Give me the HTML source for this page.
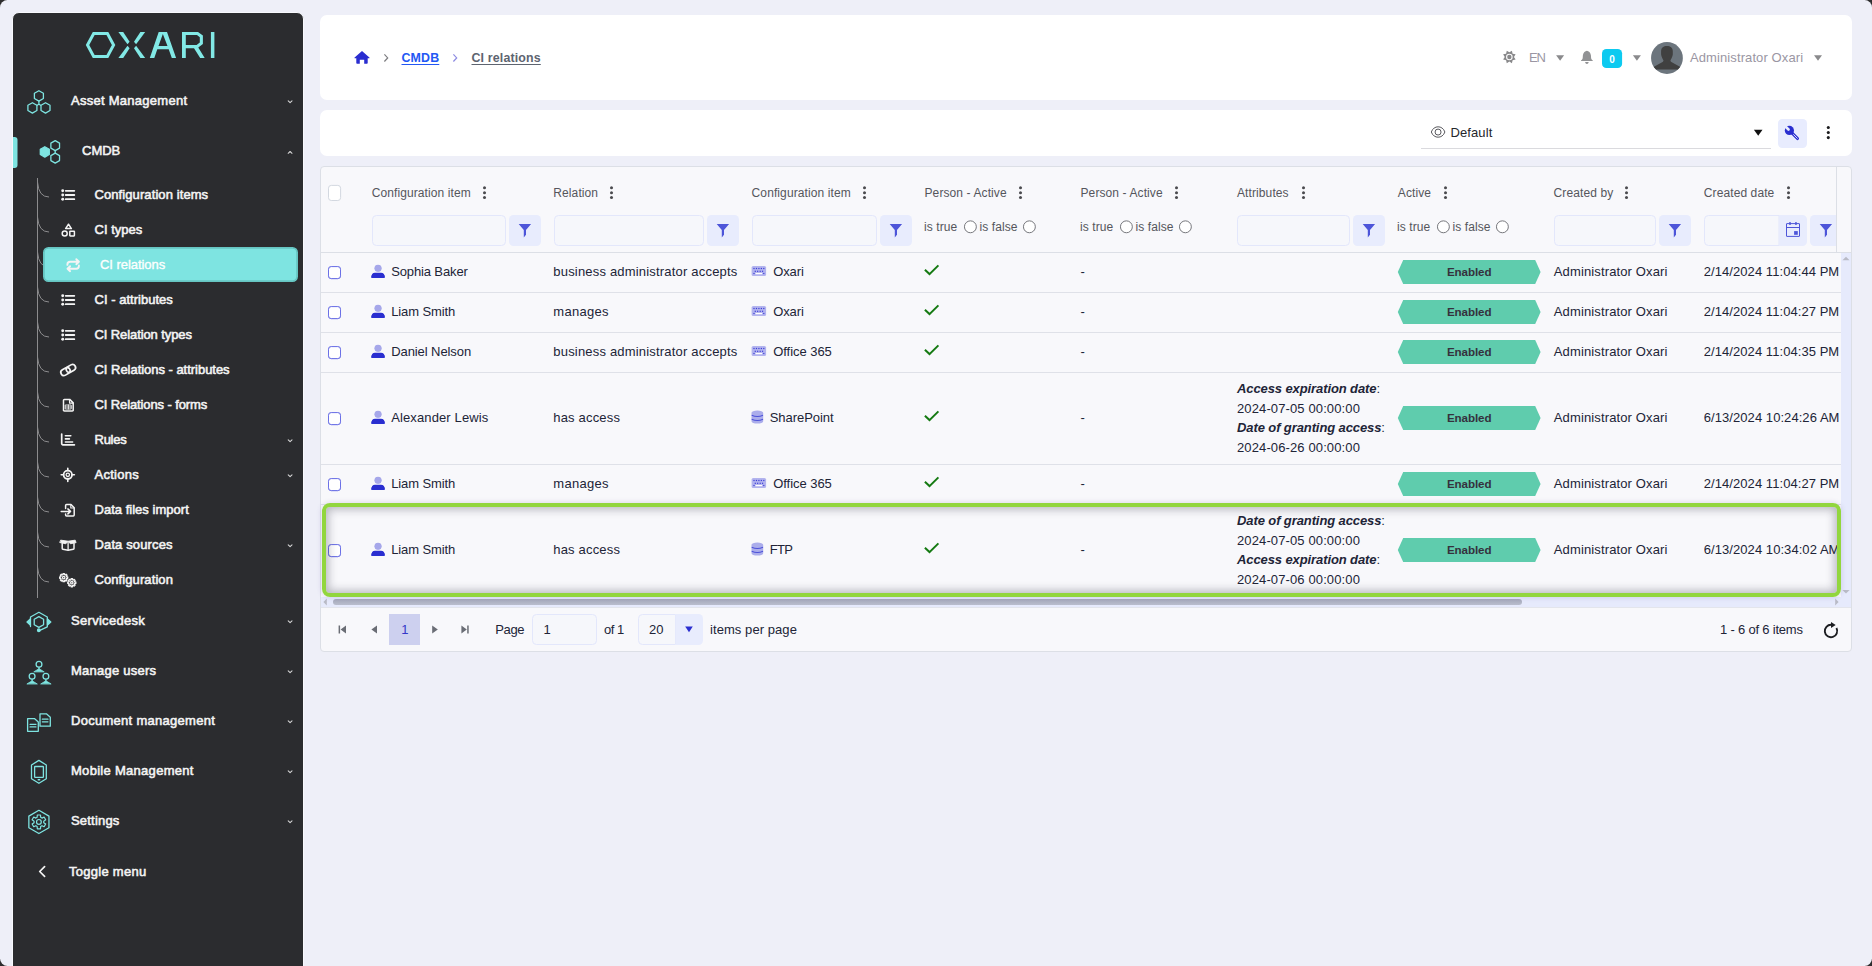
<!DOCTYPE html>
<html lang="en">
<head>
<meta charset="utf-8">
<title>CI relations</title>
<style>
*{box-sizing:border-box;margin:0;padding:0}
html{background:#2d2d2e;width:1872px;height:966px;overflow:hidden}
body{position:relative;width:1872px;height:966px;overflow:hidden;background:#eeeff8;border-radius:7.5px;font-family:"Liberation Sans",sans-serif;font-size:13px;color:#2b2c30}
.abs{position:absolute}
svg{display:block;overflow:visible}
/* ---------- sidebar ---------- */
#side{position:absolute;left:12px;top:12px;width:292px;height:960px;background:#2b2c2f;border:1px solid #f8f9fd;border-radius:7px 7px 0 0}
.mi{position:absolute;left:0;width:290px;height:24px;color:#f4f4f4;font-weight:400;-webkit-text-stroke:0.55px #f4f4f4;font-size:13px;letter-spacing:0.27px;line-height:24px;white-space:nowrap}
.mi .t{position:absolute;left:58px;top:0}
.si{position:absolute;left:0;width:290px;height:24px;color:#f4f4f4;font-weight:400;-webkit-text-stroke:0.55px #f4f4f4;font-size:13px;letter-spacing:0.02px;line-height:24px;white-space:nowrap}
.si .t{position:absolute;left:81px;top:0}
/* ---------- cards ---------- */
.card{position:absolute;background:#fff;border-radius:7px}
#hdr{left:320px;top:15px;width:1532px;height:85px}
#tool{left:320px;top:110px;width:1532px;height:46px}
#grid{position:absolute;left:320px;top:166px;width:1532px;height:486px;background:#f8f8fb;border:1px solid #dcdfe6;border-radius:4px;overflow:hidden}
.bc{font-weight:700;font-size:12.4px;line-height:16px;text-decoration:underline;text-underline-offset:2px;text-decoration-thickness:1px;letter-spacing:0.15px;white-space:nowrap}
.ht{font-size:13px;line-height:16px;color:#9a96a3;white-space:nowrap}
.c{font-size:13px;line-height:16px;color:#212437;white-space:nowrap}
.h{font-size:12px;line-height:16px;color:#55565c;white-space:nowrap;letter-spacing:0.1px}
.en{width:142.8px;text-align:center;font-weight:700;font-size:11.6px;line-height:16px;color:#35313d;letter-spacing:-0.1px}

</style>
</head>
<body>
<!-- SIDEBAR -->
<div id="side">
<svg class="abs" style="left:0;top:0" width="290" height="70" viewBox="13 13 290 70">
<g fill="#82e9e6">
<polygon points="87.5,45 93.7,33.5 107.4,33.5 113.6,45 107.4,56.5 93.7,56.5" fill="none" stroke="#82e9e6" stroke-width="3" stroke-linejoin="miter"/>
<polygon points="118.4,32 123.2,32 129.6,41.7 127.5,44.3"/>
<polygon points="127.5,45.7 129.6,48.3 123.2,58 118.4,58"/>
<polygon points="145.2,32 140.4,32 134,41.7 136.1,44.3"/>
<polygon points="136.1,45.7 134,48.3 140.4,58 145.2,58"/>
<path fill-rule="evenodd" d="M149.8,58 L158.7,32 L167,32 L176.1,58 L171.8,58 L168.7,49.3 L157.3,49.3 L154.3,58 Z M162.85,34 L158.5,46 L167.5,46 Z"/>
<path fill-rule="evenodd" d="M182,32 L198,32 L202.9,35.6 L202.9,43.9 L198.3,47.4 L204.7,58 L200.2,58 L194,48.2 L185.8,48.2 L185.8,58 L182,58 Z M185.8,35.1 L197,35.1 L199.8,37.2 L199.8,42.6 L196.6,44.9 L185.8,44.9 Z"/>
<rect x="210.9" y="32" width="3.5" height="26"/>
</g>
</svg>

<svg class="abs" style="left:-13px;top:-13px" width="320" height="979" viewBox="0 0 320 979">
<g fill="none" stroke="#8c8c8e" stroke-width="1">
<path d="M37.5,178 V598"/>
<path d="M37.5,182 Q38.5,197 49,197"/>
<path d="M37.5,217 Q38.5,232 49,232"/>
<path d="M37.5,252 Q38.5,267 49,267"/>
<path d="M37.5,287 Q38.5,302 49,302"/>
<path d="M37.5,322 Q38.5,337 49,337"/>
<path d="M37.5,357 Q38.5,372 49,372"/>
<path d="M37.5,392 Q38.5,407 49,407"/>
<path d="M37.5,427 Q38.5,442 49,442"/>
<path d="M37.5,462 Q38.5,477 49,477"/>
<path d="M37.5,497 Q38.5,512 49,512"/>
<path d="M37.5,532 Q38.5,547 49,547"/>
<path d="M37.5,567 Q38.5,582 49,582"/>
</g>
<rect x="43.9" y="247.9" width="253.2" height="33.2" rx="4.6" fill="#7ee4e1" stroke="#66c5c2" stroke-width="1.8"/>
<path d="M13,137 h1.5 a3,3 0 0 1 3,3 v25 a3,3 0 0 1 -3,3 h-1.5 z" fill="#7ee4e1"/>
<g fill="none" stroke="#7ee4e1" stroke-width="1.3" stroke-linejoin="round" stroke-linecap="round">
<polygon points="38.90,90.70 34.40,93.30 34.40,98.50 38.90,101.10 43.40,98.50 43.40,93.30"/>
<polygon points="32.40,102.70 27.90,105.30 27.90,110.50 32.40,113.10 36.90,110.50 36.90,105.30"/>
<polygon points="45.50,102.70 41.00,105.30 41.00,110.50 45.50,113.10 50.00,110.50 50.00,105.30"/>
<path d="M38.9,101.2 V104.2 L37.1,105.2 M38.9,104.2 L40.7,105.2"/>
<polygon points="44.80,146.70 40.30,149.30 40.30,154.50 44.80,157.10 49.30,154.50 49.30,149.30" fill="#7ee4e1"/>
<polygon points="55.20,140.60 50.87,143.10 50.87,148.10 55.20,150.60 59.53,148.10 59.53,143.10"/>
<polygon points="55.20,153.10 50.87,155.60 50.87,160.60 55.20,163.10 59.53,160.60 59.53,155.60"/>
<path d="M55.2,150.7 V153"/>
<polygon points="38.90,616.60 34.22,619.30 34.22,624.70 38.90,627.40 43.58,624.70 43.58,619.30"/>
<path d="M30.5,626.6 V617 L38.9,612.3 L47.3,617 V626.8 L39.8,630.4"/>
<path d="M30.3,619 L27,622 L30.3,625 Z" fill="#7ee4e1"/>
<path d="M47.5,619 L50.8,622 L47.5,625 Z" fill="#7ee4e1"/>
<circle cx="38.8" cy="630.3" r="1.3" fill="#7ee4e1"/>
<circle cx="39" cy="664.2" r="2.9"/>
<path d="M39,667.4000000000001 V668.8000000000001"/>
<path d="M34.1,671.7 L39,668.7 L43.9,671.7 Z" fill="#7ee4e1" stroke-width="0.8"/>
<circle cx="32.1" cy="676.3" r="2.9"/>
<path d="M32.1,679.5 V680.9"/>
<path d="M27.200000000000003,683.8 L32.1,680.8 L37.0,683.8 Z" fill="#7ee4e1" stroke-width="0.8"/>
<circle cx="45.9" cy="676.3" r="2.9"/>
<path d="M45.9,679.5 V680.9"/>
<path d="M41.0,683.8 L45.9,680.8 L50.8,683.8 Z" fill="#7ee4e1" stroke-width="0.8"/>
<path d="M27.6,718.6 H34.4 L38.3,722 V731.3 H27.6 Z"/>
<path d="M30,724.3 H36 M30,726.9 H36" stroke-width="1.2"/>
<path d="M40,713.8 H46.4 L50.3,717.2 V726.2 H40 Z"/>
<path d="M42.3,719.2 H48 M42.3,721.8 H48" stroke-width="1.2"/>
<path d="M38.9,760.4 L46.3,765 V778.8 L38.9,783.3 L31.5,778.8 V765 Z"/>
<rect x="34.6" y="766.5" width="8.8" height="10.8" rx="0.6"/>
<path d="M38.2,779.7 H39.7" stroke-width="1.4"/>
<polygon points="38.90,810.30 28.85,816.10 28.85,827.70 38.90,833.50 48.95,827.70 48.95,816.10"/>
<polygon points="37.30,814.98 40.50,814.98 40.66,817.33 41.98,818.09 44.09,817.06 45.69,819.82 43.74,821.13 43.74,822.67 45.69,823.98 44.09,826.74 41.98,825.71 40.66,826.47 40.50,828.82 37.30,828.82 37.14,826.47 35.82,825.71 33.71,826.74 32.11,823.98 34.06,822.67 34.06,821.13 32.11,819.82 33.71,817.06 35.82,818.09 37.14,817.33" stroke-width="1.2"/>
<circle cx="38.9" cy="821.9" r="2.4" stroke-width="1.2"/>
</g>
<g fill="none" stroke="#d9d9d9" stroke-width="1.05" stroke-linecap="round" stroke-linejoin="round">
<path d="M288.2,100.8 L290.1,102.6 L292,100.8"/>
<path d="M288.2,439.8 L290.1,441.6 L292,439.8"/>
<path d="M288.2,474.8 L290.1,476.6 L292,474.8"/>
<path d="M288.2,544.8 L290.1,546.6 L292,544.8"/>
<path d="M288.2,620.8 L290.1,622.6 L292,620.8"/>
<path d="M288.2,670.8 L290.1,672.6 L292,670.8"/>
<path d="M288.2,720.8 L290.1,722.6 L292,720.8"/>
<path d="M288.2,770.8 L290.1,772.6 L292,770.8"/>
<path d="M288.2,820.8 L290.1,822.6 L292,820.8"/>
<path d="M288.2,153.3 L290.1,151.5 L292,153.3"/>
<path d="M44.6,866.6 L39.7,871.5 L44.6,876.4" stroke-width="1.7" stroke="#f4f4f4"/>
</g>
<g fill="none" stroke="#f4f4f4" stroke-width="1.7" stroke-linecap="round" stroke-linejoin="round">
<circle cx="62.7" cy="190.8" r="1.45" fill="#f4f4f4" stroke="none"/><path d="M65.7,190.8 H74.3" stroke-width="1.8"/><circle cx="62.7" cy="195.0" r="1.45" fill="#f4f4f4" stroke="none"/><path d="M65.7,195.0 H74.3" stroke-width="1.8"/><circle cx="62.7" cy="199.2" r="1.45" fill="#f4f4f4" stroke="none"/><path d="M65.7,199.2 H74.3" stroke-width="1.8"/>
<circle cx="62.7" cy="295.8" r="1.45" fill="#f4f4f4" stroke="none"/><path d="M65.7,295.8 H74.3" stroke-width="1.8"/><circle cx="62.7" cy="300.0" r="1.45" fill="#f4f4f4" stroke="none"/><path d="M65.7,300.0 H74.3" stroke-width="1.8"/><circle cx="62.7" cy="304.2" r="1.45" fill="#f4f4f4" stroke="none"/><path d="M65.7,304.2 H74.3" stroke-width="1.8"/>
<circle cx="62.7" cy="330.8" r="1.45" fill="#f4f4f4" stroke="none"/><path d="M65.7,330.8 H74.3" stroke-width="1.8"/><circle cx="62.7" cy="335.0" r="1.45" fill="#f4f4f4" stroke="none"/><path d="M65.7,335.0 H74.3" stroke-width="1.8"/><circle cx="62.7" cy="339.2" r="1.45" fill="#f4f4f4" stroke="none"/><path d="M65.7,339.2 H74.3" stroke-width="1.8"/>
<path d="M68.5,224.2 L71.4,228.6 H65.6 Z" stroke-width="1.5"/>
<circle cx="64.7" cy="233.6" r="2.5" stroke-width="1.5"/>
<rect x="69.8" y="231.2" width="4.6" height="4.7" rx="0.4" stroke-width="1.5"/>
<path d="M67.4,264.9 V264.4 a2.7,2.7 0 0 1 2.7,-2.7 H78.6 M76.3,259.2 L78.9,261.7 L76.3,264.2" stroke-width="1.9"/>
<path d="M78.9,265.5 V266 a2.7,2.7 0 0 1 -2.7,2.7 H67.8 M70.1,266.2 L67.5,268.7 L70.1,271.2" stroke-width="1.9"/>
<g transform="translate(68.2,370) rotate(-30)" stroke-width="1.7"><rect x="-8" y="-3.1" width="9.8" height="6.2" rx="3.1"/><rect x="-1.8" y="-3.1" width="9.8" height="6.2" rx="3.1"/></g>
<path d="M64.4,399.4 H69.7 L73.2,402.9 V410.2 a0.9,0.9 0 0 1 -0.9,0.9 H64.4 a0.9,0.9 0 0 1 -0.9,-0.9 V400.3 a0.9,0.9 0 0 1 0.9,-0.9 Z" stroke-width="1.5"/>
<path d="M69.5,399.6 V403.1 H73" stroke-width="1.1"/>
<path d="M65.6,405 H71.2 V409 H65.6 Z M65.6,407 H71.2 M68.4,405 V409" stroke-width="0.9"/>
<path d="M61.7,434 V443.6 a1.2,1.2 0 0 0 1.2,1.2 H74.4" stroke-width="1.7"/>
<path d="M65.4,435.8 H70.8 M65.4,438.9 H69.4 M65.4,442 H72.6" stroke-width="1.6"/>
<circle cx="67.8" cy="474.8" r="4.2" stroke-width="1.8"/>
<circle cx="67.8" cy="474.8" r="1.7" stroke-width="1.3"/>
<path d="M67.8,468.2 V470.4 M67.8,479.2 V481.4 M61.2,474.8 H63.4 M72.2,474.8 H74.4" stroke-width="1.6"/>
<path d="M65.6,508.6 V505.4 a0.9,0.9 0 0 1 0.9,-0.9 H71 L74.2,507.7 V515 a0.9,0.9 0 0 1 -0.9,0.9 H66.5 a0.9,0.9 0 0 1 -0.9,-0.9 V514" stroke-width="1.5"/>
<path d="M70.8,504.7 V508 H74" stroke-width="1.1"/>
<path d="M61.2,511.4 H70.2 M67.9,508.9 L70.5,511.4 L67.9,513.9" stroke-width="1.5"/>
<path d="M62.2,543.6 V548.4 a1,1 0 0 0 0.7,0.95 L68.1,550.2 L73.3,549.35 a1,1 0 0 0 0.7,-0.95 V543.6" stroke-width="1.5"/>
<path d="M61,540.2 L68.1,541.2 L75.2,540.2 L76.1,542.6 L70.4,543.8 L68.1,541.4 L65.8,543.8 L60.1,542.6 Z" fill="#f4f4f4" stroke-width="0.9"/>
<path d="M68.1,542.4 V549.8" stroke-width="1.3"/>
<polygon points="67.74,576.90 67.74,578.30 66.61,578.35 66.28,579.13 67.05,579.96 66.06,580.95 65.23,580.18 64.45,580.51 64.40,581.64 63.00,581.64 62.95,580.51 62.17,580.18 61.34,580.95 60.35,579.96 61.12,579.13 60.79,578.35 59.66,578.30 59.66,576.90 60.79,576.85 61.12,576.07 60.35,575.24 61.34,574.25 62.17,575.02 62.95,574.69 63.00,573.56 64.40,573.56 64.45,574.69 65.23,575.02 66.06,574.25 67.05,575.24 66.28,576.07 66.61,576.85" stroke-width="1.3"/><circle cx="63.7" cy="577.6" r="1.2" stroke-width="1.3"/>
<polygon points="75.84,582.00 75.84,583.40 74.71,583.45 74.38,584.23 75.15,585.06 74.16,586.05 73.33,585.28 72.55,585.61 72.50,586.74 71.10,586.74 71.05,585.61 70.27,585.28 69.44,586.05 68.45,585.06 69.22,584.23 68.89,583.45 67.76,583.40 67.76,582.00 68.89,581.95 69.22,581.17 68.45,580.34 69.44,579.35 70.27,580.12 71.05,579.79 71.10,578.66 72.50,578.66 72.55,579.79 73.33,580.12 74.16,579.35 75.15,580.34 74.38,581.17 74.71,581.95" stroke-width="1.3"/><circle cx="71.8" cy="582.7" r="1.2" stroke-width="1.3"/>
</g>
</svg>
<div class="mi" style="top:76px;"><span class="t" style="left:58px">Asset Management</span></div>
<div class="mi" style="top:126px;letter-spacing:0px"><span class="t" style="left:69px">CMDB</span></div>
<div class="si" style="top:170px;letter-spacing:0.09px"><span class="t" style="left:81.5px">Configuration items</span></div>
<div class="si" style="top:205px;letter-spacing:0.02px"><span class="t" style="left:81.5px">CI types</span></div>
<div class="si" style="top:240px;color:#fdfffe;font-weight:400;letter-spacing:-0.05px;-webkit-text-stroke:0.35px #fdfffe"><span class="t" style="left:87px">CI relations</span></div>
<div class="si" style="top:275px;letter-spacing:0.02px"><span class="t" style="left:81.5px">CI - attributes</span></div>
<div class="si" style="top:310px;letter-spacing:-0.1px"><span class="t" style="left:81.5px">CI Relation types</span></div>
<div class="si" style="top:345px;letter-spacing:-0.03px"><span class="t" style="left:81.5px">CI Relations - attributes</span></div>
<div class="si" style="top:380px;letter-spacing:-0.11px"><span class="t" style="left:81.5px">CI Relations - forms</span></div>
<div class="si" style="top:415px;letter-spacing:-0.25px"><span class="t" style="left:81.5px">Rules</span></div>
<div class="si" style="top:450px;letter-spacing:0.25px"><span class="t" style="left:81.5px">Actions</span></div>
<div class="si" style="top:485px;letter-spacing:0.02px"><span class="t" style="left:81.5px">Data files import</span></div>
<div class="si" style="top:520px;letter-spacing:0.13px"><span class="t" style="left:81.5px">Data sources</span></div>
<div class="si" style="top:555px;letter-spacing:0.09px"><span class="t" style="left:81.5px">Configuration</span></div>
<div class="mi" style="top:596px;letter-spacing:0.3px"><span class="t" style="left:58px">Servicedesk</span></div>
<div class="mi" style="top:646px;letter-spacing:0.24px"><span class="t" style="left:58px">Manage users</span></div>
<div class="mi" style="top:696px;letter-spacing:0.28px"><span class="t" style="left:58px">Document management</span></div>
<div class="mi" style="top:746px;letter-spacing:0.29px"><span class="t" style="left:58px">Mobile Management</span></div>
<div class="mi" style="top:796px;letter-spacing:0.2px"><span class="t" style="left:58px">Settings</span></div>
<div class="mi" style="top:847px;"><span class="t" style="left:56px">Toggle menu</span></div>
</div>
<!-- HEADER -->
<div class="card" id="hdr">
<svg class="abs" style="left:0;top:0" width="1532" height="85" viewBox="320 15 1532 85">
<path fill="#2a2dd0" d="M362,50.9 L369.4,57.4 a0.55,0.55 0 0 1 -0.4,0.95 H367.7 V63 a0.8,0.8 0 0 1 -0.8,0.8 H364.2 V59.8 H359.8 V63.8 H357.1 a0.8,0.8 0 0 1 -0.8,-0.8 V58.35 H355 a0.55,0.55 0 0 1 -0.4,-0.95 Z"/>
<path d="M384.4,54.3 L387.7,57.9 L384.4,61.5" fill="none" stroke="#7d7d80" stroke-width="1.2"/>
<path d="M453.4,54.3 L456.7,57.9 L453.4,61.5" fill="none" stroke="#8d8be2" stroke-width="1.2"/>
<polygon points="1513.95,56.95 1515.59,59.53 1512.60,60.20 1511.93,63.19 1509.35,61.55 1506.77,63.19 1506.10,60.20 1503.11,59.53 1504.75,56.95 1503.11,54.37 1506.10,53.70 1506.77,50.71 1509.35,52.35 1511.93,50.71 1512.60,53.70 1515.59,54.37" fill="#88888a"/>
<circle cx="1509.35" cy="56.95" r="2.75" fill="none" stroke="#fbfbfb" stroke-width="1.15"/>
<path d="M1556.1,55.2 h8 l-4,5.6 z" fill="#8a8a8c"/>
<path d="M1632.9,55.2 h8 l-4,5.6 z" fill="#8a8a8c"/>
<path d="M1814,55.2 h8 l-4,5.6 z" fill="#8a8a8c"/>
<path fill="#919294" d="M1586.9,50.7 C1588.6,50.9 1590.6,52.4 1590.9,55.2 L1591.1,58 C1591.2,59.2 1592,60 1592.8,60.6 V61.1 H1581 V60.6 C1581.8,60 1582.6,59.2 1582.7,58 L1582.9,55.2 C1583.2,52.4 1585.2,50.9 1586.9,50.7 Z M1585.1,62.1 H1588.7 C1588.5,63.4 1587.8,64.05 1586.9,64.05 C1586,64.05 1585.3,63.4 1585.1,62.1 Z"/>
<rect x="1602" y="48.9" width="20.1" height="19.2" rx="4.4" fill="#0dcaf0"/>
<defs><clipPath id="av"><circle cx="1666.95" cy="58" r="15.9"/></clipPath></defs>
<circle cx="1666.95" cy="58" r="15.9" fill="#6c757d"/>
<g clip-path="url(#av)" fill="#404040"><path d="M1661.1,51 C1661.1,47.6 1663.6,45.9 1666.95,45.9 C1670.3,45.9 1672.8,47.6 1672.8,51 L1672.8,54.4 C1672.4,57 1671.3,58.8 1670.4,60.3 L1670.9,61.7 L1680.4,67 L1679,69.6 H1654.9 L1653.5,67 L1663,61.7 L1663.5,60.3 C1662.6,58.8 1661.5,57 1661.1,54.4 Z"/></g>
</svg>
<div class="abs bc" style="left:81.5px;top:35px;color:#2257f4">CMDB</div>
<div class="abs bc" style="left:151.5px;top:35px;color:#5d6470">CI relations</div>
<div class="abs ht" style="left:1209px;top:35px;letter-spacing:-1.2px">EN</div>
<div class="abs" style="left:1282px;top:35.4px;width:20.2px;height:19px;line-height:19px;text-align:center;color:#fff;font-weight:700;font-size:10px">0</div>
<div class="abs ht" style="left:1370px;top:35px;letter-spacing:0.1px">Administrator Oxari</div>
</div>
<div class="card" id="tool">
<svg class="abs" style="left:0;top:0" width="1532" height="46" viewBox="320 110 1532 46">
<rect x="1421" y="148" width="350" height="1" fill="#dadade"/>
<path d="M1431.3,132 C1432.6,128.4 1435.3,126.8 1438.1,126.8 C1440.9,126.8 1443.6,128.4 1444.9,132 C1443.6,135.6 1440.9,137.2 1438.1,137.2 C1435.3,137.2 1432.6,135.6 1431.3,132 Z" fill="none" stroke="#3a3a40" stroke-width="0.85"/>
<circle cx="1438.05" cy="132.05" r="3.0" fill="none" stroke="#3a3a40" stroke-width="0.85"/>
<path d="M1753.9,129.8 h8.6 l-4.3,6 z" fill="#111"/>
<rect x="1778" y="119" width="29" height="29" rx="4.2" fill="#e8ecfe"/>
<circle cx="1789.4" cy="130.4" r="4.6" fill="#2a2fd0"/>
<path d="M1784.6,125.6 L1788.5,129.5" stroke="#e8ecfe" stroke-width="2.7" stroke-linecap="round" fill="none"/>
<path d="M1792,133 L1797.5,138.5" stroke="#2a2fd0" stroke-width="3.1" stroke-linecap="round" fill="none"/>
<path d="M1793.6,134.6 L1797.3,138.3" stroke="#e8ecfe" stroke-width="0.9" stroke-linecap="round" fill="none"/>
<circle cx="1828.3" cy="127.5" r="1.55" fill="#1c1c1e"/>
<circle cx="1828.3" cy="132.55" r="1.55" fill="#1c1c1e"/>
<circle cx="1828.3" cy="137.6" r="1.55" fill="#1c1c1e"/>
</svg>
<div class="abs" style="left:1130.5px;top:15px;line-height:16px;font-size:13px;color:#25262b;letter-spacing:0.1px">Default</div>
</div>
<!-- GRID -->
<div id="grid">
<svg class="abs" style="left:0;top:0" width="1530" height="484" viewBox="321 167 1530 484">
<rect x="321" y="252" width="1530" height="1" fill="#dcdfe6"/>
<rect x="1836" y="167" width="1" height="85" fill="#dcdfe6"/>
<rect x="321" y="292" width="1520" height="1" fill="#dfe1e8"/>
<rect x="321" y="332" width="1520" height="1" fill="#dfe1e8"/>
<rect x="321" y="372" width="1520" height="1" fill="#dfe1e8"/>
<rect x="321" y="464" width="1520" height="1" fill="#dfe1e8"/>
<rect x="321" y="504" width="1520" height="1" fill="#dfe1e8"/>
<rect x="1841" y="253" width="10" height="354" fill="#e6eafc"/>
<rect x="321" y="597" width="1530" height="10.5" fill="#e6eafc"/>
<defs><linearGradient id="th" x1="0" y1="0" x2="0" y2="1"><stop offset="0" stop-color="#a6aabb"/><stop offset="1" stop-color="#b9bdcd"/></linearGradient></defs><rect x="333" y="599" width="1189" height="6" rx="3" fill="url(#th)"/>
<path d="M323.4,602 l3.4,-3.6 v7.2 z" fill="#b9bbc6"/>
<path d="M1838.6,602 l-3.4,-3.6 v7.2 z" fill="#b9bbc6"/>
<path d="M1846,256.8 l3.6,3.4 h-7.2 z" fill="#b9bbc6"/>
<path d="M1846,593.4 l3.6,-3.4 h-7.2 z" fill="#b9bbc6"/>
<rect x="321" y="607" width="1530" height="1" fill="#e3e5ec"/>
<circle cx="484.5" cy="187.8" r="1.5" fill="#4a4a4e"/>
<circle cx="484.5" cy="192.7" r="1.5" fill="#4a4a4e"/>
<circle cx="484.5" cy="197.6" r="1.5" fill="#4a4a4e"/>
<circle cx="611.5" cy="187.8" r="1.5" fill="#4a4a4e"/>
<circle cx="611.5" cy="192.7" r="1.5" fill="#4a4a4e"/>
<circle cx="611.5" cy="197.6" r="1.5" fill="#4a4a4e"/>
<circle cx="864.5" cy="187.8" r="1.5" fill="#4a4a4e"/>
<circle cx="864.5" cy="192.7" r="1.5" fill="#4a4a4e"/>
<circle cx="864.5" cy="197.6" r="1.5" fill="#4a4a4e"/>
<circle cx="1020.5" cy="187.8" r="1.5" fill="#4a4a4e"/>
<circle cx="1020.5" cy="192.7" r="1.5" fill="#4a4a4e"/>
<circle cx="1020.5" cy="197.6" r="1.5" fill="#4a4a4e"/>
<circle cx="1176.5" cy="187.8" r="1.5" fill="#4a4a4e"/>
<circle cx="1176.5" cy="192.7" r="1.5" fill="#4a4a4e"/>
<circle cx="1176.5" cy="197.6" r="1.5" fill="#4a4a4e"/>
<circle cx="1303.5" cy="187.8" r="1.5" fill="#4a4a4e"/>
<circle cx="1303.5" cy="192.7" r="1.5" fill="#4a4a4e"/>
<circle cx="1303.5" cy="197.6" r="1.5" fill="#4a4a4e"/>
<circle cx="1445.5" cy="187.8" r="1.5" fill="#4a4a4e"/>
<circle cx="1445.5" cy="192.7" r="1.5" fill="#4a4a4e"/>
<circle cx="1445.5" cy="197.6" r="1.5" fill="#4a4a4e"/>
<circle cx="1626.5" cy="187.8" r="1.5" fill="#4a4a4e"/>
<circle cx="1626.5" cy="192.7" r="1.5" fill="#4a4a4e"/>
<circle cx="1626.5" cy="197.6" r="1.5" fill="#4a4a4e"/>
<circle cx="1788.5" cy="187.8" r="1.5" fill="#4a4a4e"/>
<circle cx="1788.5" cy="192.7" r="1.5" fill="#4a4a4e"/>
<circle cx="1788.5" cy="197.6" r="1.5" fill="#4a4a4e"/>
<rect x="372.5" y="215.5" width="133" height="30" rx="4" fill="#f6f7fb" stroke="#e3e7fb"/>
<rect x="509" y="215" width="32" height="31" rx="4.5" fill="#e8ecfd"/><path d="M518.6999999999999,224 h12.4 l-5.1,5.9 v4.9 l-2.2,2.8 v-7.7 z" fill="#4d55d9"/>
<rect x="554.5" y="215.5" width="149" height="30" rx="4" fill="#f6f7fb" stroke="#e3e7fb"/>
<rect x="707" y="215" width="32" height="31" rx="4.5" fill="#e8ecfd"/><path d="M716.6999999999999,224 h12.4 l-5.1,5.9 v4.9 l-2.2,2.8 v-7.7 z" fill="#4d55d9"/>
<rect x="752.5" y="215.5" width="124" height="30" rx="4" fill="#f6f7fb" stroke="#e3e7fb"/>
<rect x="880" y="215" width="32" height="31" rx="4.5" fill="#e8ecfd"/><path d="M889.6999999999999,224 h12.4 l-5.1,5.9 v4.9 l-2.2,2.8 v-7.7 z" fill="#4d55d9"/>
<rect x="1237.5" y="215.5" width="112" height="30" rx="4" fill="#f6f7fb" stroke="#e3e7fb"/>
<rect x="1353" y="215" width="32" height="31" rx="4.5" fill="#e8ecfd"/><path d="M1362.7,224 h12.4 l-5.1,5.9 v4.9 l-2.2,2.8 v-7.7 z" fill="#4d55d9"/>
<rect x="1554.5" y="215.5" width="101" height="30" rx="4" fill="#f6f7fb" stroke="#e3e7fb"/>
<rect x="1659" y="215" width="32" height="31" rx="4.5" fill="#e8ecfd"/><path d="M1668.7,224 h12.4 l-5.1,5.9 v4.9 l-2.2,2.8 v-7.7 z" fill="#4d55d9"/>
<path d="M1708.5,215.5 H1779 V245.5 H1708.5 a4,4 0 0 1 -4,-4 V219.5 a4,4 0 0 1 4,-4 Z" fill="#f6f7fb" stroke="#e3e7fb"/>
<path d="M1779,215 H1802.5 a4.5,4.5 0 0 1 4.5,4.5 V241.5 a4.5,4.5 0 0 1 -4.5,4.5 H1779 Z" fill="#e8ecfd"/>
<g fill="none" stroke="#4d55d9" stroke-width="1"><rect x="1786.5" y="223.6" width="13" height="12.8" rx="0.3"/><path d="M1786.5,227.5 H1799.5"/></g><rect x="1789.25" y="222" width="1.5" height="3" rx="0.6" fill="#4d55d9"/><rect x="1795.2" y="222" width="1.5" height="3" rx="0.6" fill="#4d55d9"/><rect x="1794.1" y="231.1" width="3.7" height="3.7" fill="#4d55d9"/>
<path d="M1814.5,215 H1836 V246 H1814.5 a4.5,4.5 0 0 1 -4.5,-4.5 V219.5 a4.5,4.5 0 0 1 4.5,-4.5 Z" fill="#e8ecfd"/>
<path d="M1819.7,224 h12.4 l-5.1,5.9 v4.9 l-2.2,2.8 v-7.7 z" fill="#4d55d9"/>
<circle cx="970.4" cy="226.8" r="5.95" fill="#fff" stroke="#76777c" stroke-width="1"/>
<circle cx="1029.3999999999999" cy="226.8" r="5.95" fill="#fff" stroke="#76777c" stroke-width="1"/>
<circle cx="1126.3999999999999" cy="226.8" r="5.95" fill="#fff" stroke="#76777c" stroke-width="1"/>
<circle cx="1185.3999999999999" cy="226.8" r="5.95" fill="#fff" stroke="#76777c" stroke-width="1"/>
<circle cx="1443.3999999999999" cy="226.8" r="5.95" fill="#fff" stroke="#76777c" stroke-width="1"/>
<circle cx="1502.3999999999999" cy="226.8" r="5.95" fill="#fff" stroke="#76777c" stroke-width="1"/>
<rect x="328.5" y="185.4" width="12.1" height="15.1" rx="2.8" fill="#fff" stroke="#d3d8e0"/>
<rect x="328.5" y="266.6" width="12" height="12" rx="2.8" fill="#fff" stroke="#6b70e6"/>
<circle cx="378" cy="268.2" r="3.55" fill="#a7a9ea"/>
<path d="M371.4,277.9 v-1.3 c0.3,-2.2 1.6,-3.8 3.6,-3.8 h6 c2,0 3.3,1.6 3.6,3.8 v1.3 z" fill="#2a32d2"/>
<rect x="328.5" y="266.6" width="12" height="12" rx="2.8" fill="#fff" stroke="#6b70e6"/>
<circle cx="378.1" cy="268.3" r="3.25" fill="#a6a7ea"/>
<path d="M371.5,277.4 v-0.6 a3.9,3.9 0 0 1 3.9,-3.9 h5.4 a3.9,3.9 0 0 1 3.9,3.9 v0.6 z" fill="#2a2ed0"/>
<path d="M924.9,269.8 L929.5,274.1 L938.4,265.4" fill="none" stroke="#157a12" stroke-width="2" stroke-linejoin="miter"/>
<path d="M1397.8,272 l5.4,-12 h132 l5.4,12 l-5.4,12 h-132 z" fill="#5fccad"/>
<rect x="328.5" y="306.6" width="12" height="12" rx="2.8" fill="#fff" stroke="#6b70e6"/>
<circle cx="378" cy="308.2" r="3.55" fill="#a7a9ea"/>
<path d="M371.4,317.9 v-1.3 c0.3,-2.2 1.6,-3.8 3.6,-3.8 h6 c2,0 3.3,1.6 3.6,3.8 v1.3 z" fill="#2a32d2"/>
<rect x="328.5" y="306.6" width="12" height="12" rx="2.8" fill="#fff" stroke="#6b70e6"/>
<circle cx="378.1" cy="308.3" r="3.25" fill="#a6a7ea"/>
<path d="M371.5,317.4 v-0.6 a3.9,3.9 0 0 1 3.9,-3.9 h5.4 a3.9,3.9 0 0 1 3.9,3.9 v0.6 z" fill="#2a2ed0"/>
<path d="M924.9,309.8 L929.5,314.1 L938.4,305.4" fill="none" stroke="#157a12" stroke-width="2" stroke-linejoin="miter"/>
<path d="M1397.8,312 l5.4,-12 h132 l5.4,12 l-5.4,12 h-132 z" fill="#5fccad"/>
<rect x="328.5" y="346.6" width="12" height="12" rx="2.8" fill="#fff" stroke="#6b70e6"/>
<circle cx="378" cy="348.2" r="3.55" fill="#a7a9ea"/>
<path d="M371.4,357.9 v-1.3 c0.3,-2.2 1.6,-3.8 3.6,-3.8 h6 c2,0 3.3,1.6 3.6,3.8 v1.3 z" fill="#2a32d2"/>
<rect x="328.5" y="346.6" width="12" height="12" rx="2.8" fill="#fff" stroke="#6b70e6"/>
<circle cx="378.1" cy="348.3" r="3.25" fill="#a6a7ea"/>
<path d="M371.5,357.4 v-0.6 a3.9,3.9 0 0 1 3.9,-3.9 h5.4 a3.9,3.9 0 0 1 3.9,3.9 v0.6 z" fill="#2a2ed0"/>
<path d="M924.9,349.8 L929.5,354.1 L938.4,345.4" fill="none" stroke="#157a12" stroke-width="2" stroke-linejoin="miter"/>
<path d="M1397.8,352 l5.4,-12 h132 l5.4,12 l-5.4,12 h-132 z" fill="#5fccad"/>
<rect x="328.5" y="412.6" width="12" height="12" rx="2.8" fill="#fff" stroke="#6b70e6"/>
<circle cx="378" cy="414.2" r="3.55" fill="#a7a9ea"/>
<path d="M371.4,423.9 v-1.3 c0.3,-2.2 1.6,-3.8 3.6,-3.8 h6 c2,0 3.3,1.6 3.6,3.8 v1.3 z" fill="#2a32d2"/>
<rect x="328.5" y="412.6" width="12" height="12" rx="2.8" fill="#fff" stroke="#6b70e6"/>
<circle cx="378.1" cy="414.3" r="3.25" fill="#a6a7ea"/>
<path d="M371.5,423.4 v-0.6 a3.9,3.9 0 0 1 3.9,-3.9 h5.4 a3.9,3.9 0 0 1 3.9,3.9 v0.6 z" fill="#2a2ed0"/>
<path d="M924.9,415.8 L929.5,420.1 L938.4,411.4" fill="none" stroke="#157a12" stroke-width="2" stroke-linejoin="miter"/>
<path d="M1397.8,418 l5.4,-12 h132 l5.4,12 l-5.4,12 h-132 z" fill="#5fccad"/>
<rect x="328.5" y="478.6" width="12" height="12" rx="2.8" fill="#fff" stroke="#6b70e6"/>
<circle cx="378" cy="480.2" r="3.55" fill="#a7a9ea"/>
<path d="M371.4,489.9 v-1.3 c0.3,-2.2 1.6,-3.8 3.6,-3.8 h6 c2,0 3.3,1.6 3.6,3.8 v1.3 z" fill="#2a32d2"/>
<rect x="328.5" y="478.6" width="12" height="12" rx="2.8" fill="#fff" stroke="#6b70e6"/>
<circle cx="378.1" cy="480.3" r="3.25" fill="#a6a7ea"/>
<path d="M371.5,489.4 v-0.6 a3.9,3.9 0 0 1 3.9,-3.9 h5.4 a3.9,3.9 0 0 1 3.9,3.9 v0.6 z" fill="#2a2ed0"/>
<path d="M924.9,481.8 L929.5,486.1 L938.4,477.4" fill="none" stroke="#157a12" stroke-width="2" stroke-linejoin="miter"/>
<path d="M1397.8,484 l5.4,-12 h132 l5.4,12 l-5.4,12 h-132 z" fill="#5fccad"/>
<rect x="328.5" y="544.6" width="12" height="12" rx="2.8" fill="#fff" stroke="#6b70e6"/>
<circle cx="378" cy="546.2" r="3.55" fill="#a7a9ea"/>
<path d="M371.4,555.9 v-1.3 c0.3,-2.2 1.6,-3.8 3.6,-3.8 h6 c2,0 3.3,1.6 3.6,3.8 v1.3 z" fill="#2a32d2"/>
<rect x="328.5" y="544.6" width="12" height="12" rx="2.8" fill="#fff" stroke="#6b70e6"/>
<circle cx="378.1" cy="546.3" r="3.25" fill="#a6a7ea"/>
<path d="M371.5,555.4 v-0.6 a3.9,3.9 0 0 1 3.9,-3.9 h5.4 a3.9,3.9 0 0 1 3.9,3.9 v0.6 z" fill="#2a2ed0"/>
<path d="M924.9,547.8 L929.5,552.1 L938.4,543.4" fill="none" stroke="#157a12" stroke-width="2" stroke-linejoin="miter"/>
<path d="M1397.8,550 l5.4,-12 h132 l5.4,12 l-5.4,12 h-132 z" fill="#5fccad"/>
<rect x="751.6" y="265.9" width="14.5" height="10.2" rx="1.6" fill="#b3b4ee"/><rect x="753.4" y="267.9" width="1.2" height="1.2" fill="#3d3fd6"/><rect x="755.85" y="267.9" width="1.2" height="1.2" fill="#3d3fd6"/><rect x="758.3" y="267.9" width="1.2" height="1.2" fill="#3d3fd6"/><rect x="760.75" y="267.9" width="1.2" height="1.2" fill="#3d3fd6"/><rect x="763.1999999999999" y="267.9" width="1.2" height="1.2" fill="#3d3fd6"/><rect x="754.6999999999999" y="270.7" width="1.2" height="1.2" fill="#3d3fd6"/><rect x="757.05" y="270.7" width="1.2" height="1.2" fill="#3d3fd6"/><rect x="759.6" y="270.7" width="1.2" height="1.2" fill="#3d3fd6"/><rect x="761.9499999999999" y="270.7" width="1.2" height="1.2" fill="#3d3fd6"/><rect x="753.4" y="272.9" width="1.2" height="1.2" fill="#3d3fd6"/><rect x="763.1999999999999" y="272.9" width="1.2" height="1.2" fill="#3d3fd6"/><rect x="755.5" y="272.95" width="6.6" height="1.25" fill="#fff"/>
<rect x="751.6" y="305.9" width="14.5" height="10.2" rx="1.6" fill="#b3b4ee"/><rect x="753.4" y="307.9" width="1.2" height="1.2" fill="#3d3fd6"/><rect x="755.85" y="307.9" width="1.2" height="1.2" fill="#3d3fd6"/><rect x="758.3" y="307.9" width="1.2" height="1.2" fill="#3d3fd6"/><rect x="760.75" y="307.9" width="1.2" height="1.2" fill="#3d3fd6"/><rect x="763.1999999999999" y="307.9" width="1.2" height="1.2" fill="#3d3fd6"/><rect x="754.6999999999999" y="310.7" width="1.2" height="1.2" fill="#3d3fd6"/><rect x="757.05" y="310.7" width="1.2" height="1.2" fill="#3d3fd6"/><rect x="759.6" y="310.7" width="1.2" height="1.2" fill="#3d3fd6"/><rect x="761.9499999999999" y="310.7" width="1.2" height="1.2" fill="#3d3fd6"/><rect x="753.4" y="312.9" width="1.2" height="1.2" fill="#3d3fd6"/><rect x="763.1999999999999" y="312.9" width="1.2" height="1.2" fill="#3d3fd6"/><rect x="755.5" y="312.95" width="6.6" height="1.25" fill="#fff"/>
<rect x="751.6" y="345.9" width="14.5" height="10.2" rx="1.6" fill="#b3b4ee"/><rect x="753.4" y="347.9" width="1.2" height="1.2" fill="#3d3fd6"/><rect x="755.85" y="347.9" width="1.2" height="1.2" fill="#3d3fd6"/><rect x="758.3" y="347.9" width="1.2" height="1.2" fill="#3d3fd6"/><rect x="760.75" y="347.9" width="1.2" height="1.2" fill="#3d3fd6"/><rect x="763.1999999999999" y="347.9" width="1.2" height="1.2" fill="#3d3fd6"/><rect x="754.6999999999999" y="350.7" width="1.2" height="1.2" fill="#3d3fd6"/><rect x="757.05" y="350.7" width="1.2" height="1.2" fill="#3d3fd6"/><rect x="759.6" y="350.7" width="1.2" height="1.2" fill="#3d3fd6"/><rect x="761.9499999999999" y="350.7" width="1.2" height="1.2" fill="#3d3fd6"/><rect x="753.4" y="352.9" width="1.2" height="1.2" fill="#3d3fd6"/><rect x="763.1999999999999" y="352.9" width="1.2" height="1.2" fill="#3d3fd6"/><rect x="755.5" y="352.95" width="6.6" height="1.25" fill="#fff"/>
<rect x="751.6" y="477.9" width="14.5" height="10.2" rx="1.6" fill="#b3b4ee"/><rect x="753.4" y="479.9" width="1.2" height="1.2" fill="#3d3fd6"/><rect x="755.85" y="479.9" width="1.2" height="1.2" fill="#3d3fd6"/><rect x="758.3" y="479.9" width="1.2" height="1.2" fill="#3d3fd6"/><rect x="760.75" y="479.9" width="1.2" height="1.2" fill="#3d3fd6"/><rect x="763.1999999999999" y="479.9" width="1.2" height="1.2" fill="#3d3fd6"/><rect x="754.6999999999999" y="482.7" width="1.2" height="1.2" fill="#3d3fd6"/><rect x="757.05" y="482.7" width="1.2" height="1.2" fill="#3d3fd6"/><rect x="759.6" y="482.7" width="1.2" height="1.2" fill="#3d3fd6"/><rect x="761.9499999999999" y="482.7" width="1.2" height="1.2" fill="#3d3fd6"/><rect x="753.4" y="484.9" width="1.2" height="1.2" fill="#3d3fd6"/><rect x="763.1999999999999" y="484.9" width="1.2" height="1.2" fill="#3d3fd6"/><rect x="755.5" y="484.95" width="6.6" height="1.25" fill="#fff"/>
<path d="M751.5,412.8 a5.85,2.3 0 0 1 11.7,0 v8.5 a5.85,2.3 0 0 1 -11.7,0 z" fill="#abadeb"/><path d="M751.7,415.3 q5.65,2.5 11.3,0 M751.7,419.3 q5.65,2.5 11.3,0" fill="none" stroke="#4d52d9" stroke-width="1.05"/>
<path d="M751.5,544.8 a5.85,2.3 0 0 1 11.7,0 v8.5 a5.85,2.3 0 0 1 -11.7,0 z" fill="#abadeb"/><path d="M751.7,547.3 q5.65,2.5 11.3,0 M751.7,551.3 q5.65,2.5 11.3,0" fill="none" stroke="#4d52d9" stroke-width="1.05"/>
<rect x="389" y="614" width="31" height="31" fill="#cdd0ef"/>
<rect x="532.5" y="614.5" width="64" height="30" rx="4" fill="#f6f7fb" stroke="#e3e7fb"/>
<path d="M642.5,614.5 H675.5 V644.5 H642.5 a4,4 0 0 1 -4,-4 V618.5 a4,4 0 0 1 4,-4 Z" fill="#f6f7fb" stroke="#e3e7fb"/>
<path d="M675.5,614 H698.5 a4.5,4.5 0 0 1 4.5,4.5 V640.5 a4.5,4.5 0 0 1 -4.5,4.5 H675.5 Z" fill="#e8ecfd"/>
<path d="M685.2,626.6 h7.6 l-3.8,5.6 z" fill="#2a2ed0"/>
<path d="M338.6,625.6 h1.5 v8 h-1.5 z M346,625.6 v8 l-5.4,-4 z" fill="#6a6d75"/>
<path d="M377,625.6 v8 l-5.6,-4 z" fill="#6a6d75"/>
<path d="M432.2,625.6 v8 l5.6,-4 z" fill="#6a6d75"/>
<path d="M461.4,625.6 v8 l5.4,-4 z M467.2,625.6 h1.5 v8 h-1.5 z" fill="#6a6d75"/>
<path d="M1831.3,624.8 A6.2,6.2 0 1 0 1836.44,628.03" fill="none" stroke="#1d1e22" stroke-width="1.9"/>
<path d="M1831,621.9 L1835.7,624.9 L1831,627.9 Z" fill="#1d1e22"/>
</svg>
<div class="abs h" style="left:50.7px;top:18px;">Configuration item</div>
<div class="abs h" style="left:232.3px;top:18px;">Relation</div>
<div class="abs h" style="left:430.6px;top:18px;">Configuration item</div>
<div class="abs h" style="left:603.5px;top:18px;">Person - Active</div>
<div class="abs h" style="left:759.5px;top:18px;">Person - Active</div>
<div class="abs h" style="left:916px;top:18px;">Attributes</div>
<div class="abs h" style="left:1076.8px;top:18px;">Active</div>
<div class="abs h" style="left:1232.6px;top:18px;">Created by</div>
<div class="abs h" style="left:1382.8px;top:18px;">Created date</div>
<div class="abs h" style="left:603px;top:51.5px;">is true</div>
<div class="abs h" style="left:658.5px;top:51.5px;">is false</div>
<div class="abs h" style="left:759px;top:51.5px;">is true</div>
<div class="abs h" style="left:814.5px;top:51.5px;">is false</div>
<div class="abs h" style="left:1076px;top:51.5px;">is true</div>
<div class="abs h" style="left:1131.5px;top:51.5px;">is false</div>
<div class="abs c" style="left:70.2px;top:97px;letter-spacing:-0.13px">Sophia Baker</div>
<div class="abs c" style="left:232.3px;top:97px;letter-spacing:0.19px">business administrator accepts</div>
<div class="abs c" style="left:452.2px;top:97px;letter-spacing:-0.09px">Oxari</div>
<div class="abs c" style="left:759.5px;top:97px;">-</div>
<div class="abs en" style="left:1076.8px;top:97px;">Enabled</div>
<div class="abs c" style="left:1232.8px;top:97px;letter-spacing:0.13px">Administrator Oxari</div>
<div class="abs c" style="left:1382.8px;top:97px;width:137.20000000000005px;overflow:hidden;letter-spacing:0.06px">2/14/2024 11:04:44 PM</div>
<div class="abs c" style="left:70.2px;top:137px;letter-spacing:-0.1px">Liam Smith</div>
<div class="abs c" style="left:232.3px;top:137px;letter-spacing:0.29px">manages</div>
<div class="abs c" style="left:452.2px;top:137px;letter-spacing:-0.09px">Oxari</div>
<div class="abs c" style="left:759.5px;top:137px;">-</div>
<div class="abs en" style="left:1076.8px;top:137px;">Enabled</div>
<div class="abs c" style="left:1232.8px;top:137px;letter-spacing:0.13px">Administrator Oxari</div>
<div class="abs c" style="left:1382.8px;top:137px;width:137.20000000000005px;overflow:hidden;letter-spacing:0.06px">2/14/2024 11:04:27 PM</div>
<div class="abs c" style="left:70.2px;top:177px;letter-spacing:-0.08px">Daniel Nelson</div>
<div class="abs c" style="left:232.3px;top:177px;letter-spacing:0.19px">business administrator accepts</div>
<div class="abs c" style="left:452.2px;top:177px;letter-spacing:-0.04px">Office 365</div>
<div class="abs c" style="left:759.5px;top:177px;">-</div>
<div class="abs en" style="left:1076.8px;top:177px;">Enabled</div>
<div class="abs c" style="left:1232.8px;top:177px;letter-spacing:0.13px">Administrator Oxari</div>
<div class="abs c" style="left:1382.8px;top:177px;width:137.20000000000005px;overflow:hidden;letter-spacing:0.06px">2/14/2024 11:04:35 PM</div>
<div class="abs c" style="left:70.2px;top:243px;letter-spacing:0.12px">Alexander Lewis</div>
<div class="abs c" style="left:232.3px;top:243px;letter-spacing:0.18px">has access</div>
<div class="abs c" style="left:448.7px;top:243px;letter-spacing:-0.05px">SharePoint</div>
<div class="abs c" style="left:759.5px;top:243px;">-</div>
<div class="abs en" style="left:1076.8px;top:243px;">Enabled</div>
<div class="abs c" style="left:1232.8px;top:243px;letter-spacing:0.13px">Administrator Oxari</div>
<div class="abs c" style="left:1382.8px;top:243px;width:137.20000000000005px;overflow:hidden;letter-spacing:0.06px">6/13/2024 10:24:26 AM</div>
<div class="abs c" style="left:916px;top:214px;letter-spacing:-0.1px"><b><i>Access expiration date</i></b>:</div>
<div class="abs c" style="left:916px;top:234px;letter-spacing:0.12px">2024-07-05 00:00:00</div>
<div class="abs c" style="left:916px;top:253px;letter-spacing:-0.1px"><b><i>Date of granting access</i></b>:</div>
<div class="abs c" style="left:916px;top:273px;letter-spacing:0.12px">2024-06-26 00:00:00</div>
<div class="abs c" style="left:70.2px;top:309px;letter-spacing:-0.1px">Liam Smith</div>
<div class="abs c" style="left:232.3px;top:309px;letter-spacing:0.29px">manages</div>
<div class="abs c" style="left:452.2px;top:309px;letter-spacing:-0.04px">Office 365</div>
<div class="abs c" style="left:759.5px;top:309px;">-</div>
<div class="abs en" style="left:1076.8px;top:309px;">Enabled</div>
<div class="abs c" style="left:1232.8px;top:309px;letter-spacing:0.13px">Administrator Oxari</div>
<div class="abs c" style="left:1382.8px;top:309px;width:137.20000000000005px;overflow:hidden;letter-spacing:0.06px">2/14/2024 11:04:27 PM</div>
<div class="abs c" style="left:70.2px;top:375px;letter-spacing:-0.1px">Liam Smith</div>
<div class="abs c" style="left:232.3px;top:375px;letter-spacing:0.18px">has access</div>
<div class="abs c" style="left:448.7px;top:375px;letter-spacing:-0.7px">FTP</div>
<div class="abs c" style="left:759.5px;top:375px;">-</div>
<div class="abs en" style="left:1076.8px;top:375px;">Enabled</div>
<div class="abs c" style="left:1232.8px;top:375px;letter-spacing:0.13px">Administrator Oxari</div>
<div class="abs c" style="left:1382.8px;top:375px;width:137.20000000000005px;overflow:hidden;letter-spacing:0.06px">6/13/2024 10:34:02 AM</div>
<div class="abs c" style="left:916px;top:346px;letter-spacing:-0.1px"><b><i>Date of granting access</i></b>:</div>
<div class="abs c" style="left:916px;top:366px;letter-spacing:0.12px">2024-07-05 00:00:00</div>
<div class="abs c" style="left:916px;top:385px;letter-spacing:-0.1px"><b><i>Access expiration date</i></b>:</div>
<div class="abs c" style="left:916px;top:405px;letter-spacing:0.12px">2024-07-06 00:00:00</div>
<div class="abs c" style="left:68px;top:455px;width:31.5px;text-align:center;color:#3437c9">1</div>
<div class="abs c" style="left:174.3px;top:455px;letter-spacing:-0.4px">Page</div>
<div class="abs c" style="left:222.5px;top:455px;">1</div>
<div class="abs c" style="left:283px;top:455px;letter-spacing:-0.5px">of 1</div>
<div class="abs c" style="left:328px;top:455px;">20</div>
<div class="abs c" style="left:389px;top:455px;letter-spacing:0.07px">items per page</div>
<div class="abs c" style="left:1399px;top:455px;letter-spacing:-0.2px">1 - 6 of 6 items</div>
</div>
<div class="abs" style="left:322.3px;top:503.3px;width:1518.5px;height:93.5px;border:4.6px solid #92d63e;border-radius:8px;box-shadow:inset 0 0 10px 2px rgba(20,20,40,.3),0 0 5px 1px rgba(70,50,140,.13)"></div>
</body>
</html>
